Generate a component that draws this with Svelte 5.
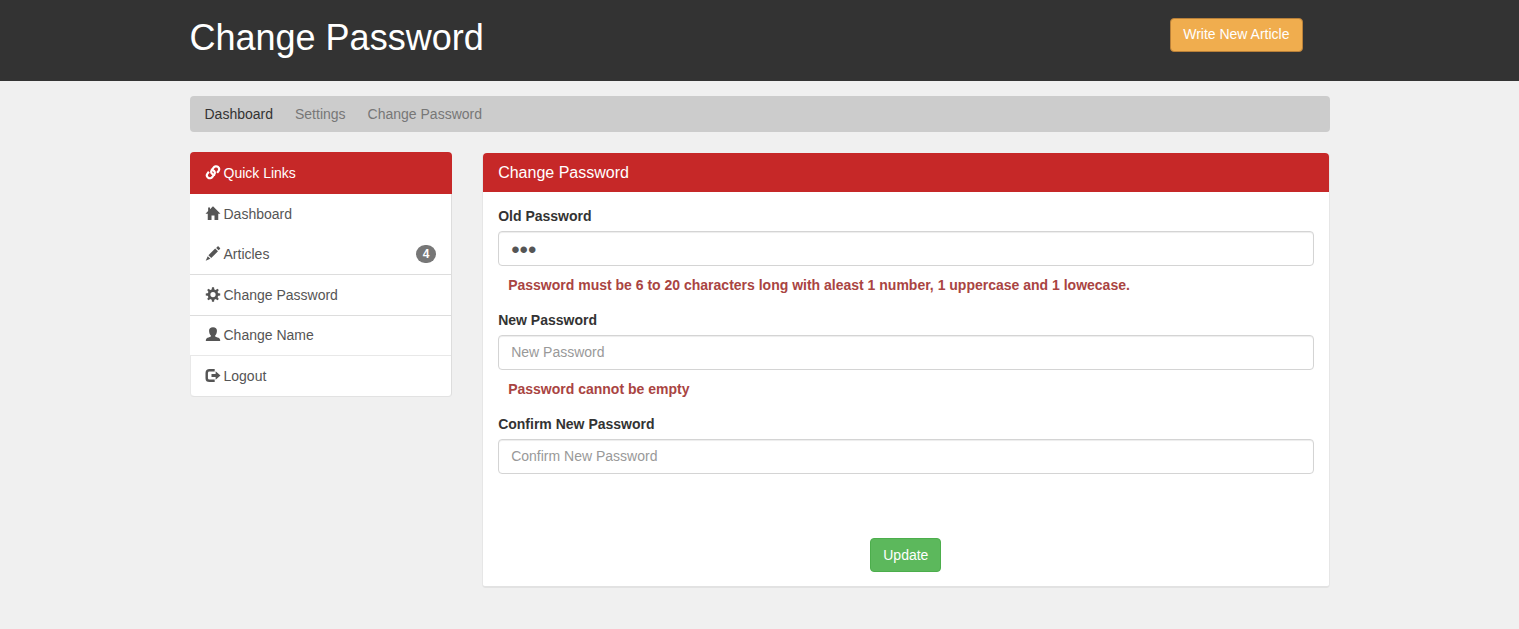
<script>
  const crumbs = [
    { label: 'Dashboard', current: true },
    { label: 'Settings' },
    { label: 'Change Password' }
  ];

  const links = [
    { label: 'Dashboard', icon: 'home', rule: 'none' },
    { label: 'Articles', icon: 'pencil', rule: 'solid', count: 4 },
    { label: 'Change Password', icon: 'cog', rule: 'solid' },
    { label: 'Change Name', icon: 'user', rule: 'inner' },
    { label: 'Logout', icon: 'logout', rule: 'last' }
  ];

  const teeth = [0, 45, 90, 135, 180, 225, 270, 315];

  let oldPassword = $state('abc');
  let newPassword = $state('');
  let confirmPassword = $state('');
</script>

{#snippet icon(name)}
  <svg class="icon" viewBox="0 0 16 16" aria-hidden="true">
    {#if name === 'link'}
      <g fill="none" stroke="currentColor" stroke-width="2.3">
        <path d="M10.2 10.4C7.4 10.8 5.2 8.2 6.4 6L8.6 2.9C9.7 1.3 11.9 1 13.3 2.1 14.7 3.2 14.9 5 13.9 6.4L12.4 8.4" />
        <path d="M5.8 5.2C8.6 4.8 10.8 7.4 9.6 9.6L7.4 12.7C6.3 14.3 4.1 14.6 2.7 13.5 1.3 12.4 1.1 10.6 2.1 9.2L3.6 7.2" />
      </g>
    {:else if name === 'home'}
      <path d="M8 .2 16 8.2H13.6V15H9.6V10H6.4V15H2.4V8.2H0L2.8 5.4V1.5H4.8V3.4Z" />
    {:else if name === 'pencil'}
      <path d="M11.4 2 12.8.6Q13.4 0 14 .6L15.4 2Q16 2.6 15.4 3.2L14 4.6ZM10.3 2.7 13.3 5.7 6.1 12.9 3.1 9.9ZM2.4 10.8 5.2 13.6 .2 15.7Z" />
    {:else if name === 'cog'}
      <circle cx="8" cy="8" r="4.2" fill="none" stroke="currentColor" stroke-width="2.8" />
      {#each teeth as turn}
        <path d="M6.5 3.4 6.9.3H9.1L9.5 3.4Z" transform="rotate({turn} 8 8)" />
      {/each}
    {:else if name === 'user'}
      <path d="M8 .2C10.8.2 12.2 1.6 12.2 4.1 12.2 6.6 11.3 8.2 10.3 9.1V10.2C11.8 10.9 13.7 11.4 14.9 12.2Q15.7 12.8 15.7 14.8H.3Q.3 12.8 1.1 12.2C2.3 11.4 4.2 10.9 5.7 10.2V9.1C4.7 8.2 3.8 6.6 3.8 4.1 3.8 1.6 5.2.2 8 .2Z" />
    {:else if name === 'logout'}
      <path d="M9.8 2.4H4.3Q1.3 2.4 1.3 5.2V10.8Q1.3 13.6 4.3 13.6H9.8" fill="none" stroke="currentColor" stroke-width="2.6" />
      <path d="M6.4 6.4H10.8V3.4L16 8 10.8 12.6V9.6H6.4Z" />
    {/if}
  </svg>
{/snippet}

<header>
  <div class="container head">
    <h1>Change Password</h1>
    <button type="button" class="btn warning">Write New Article</button>
  </div>
</header>

<div class="container">
  <nav class="crumbs" aria-label="Breadcrumb">
    {#each crumbs as crumb}
      <a href="#top" class:current={crumb.current}>{crumb.label}</a>
    {/each}
  </nav>

  <div class="columns">
    <nav class="links" aria-label="Quick Links">
      <a href="#top" class="heading">{@render icon('link')}<span>Quick Links</span></a>
      {#each links as link}
        <a href="#top" class="link {link.rule}">
          {@render icon(link.icon)}<span>{link.label}</span>
          {#if link.count}<span class="badge">{link.count}</span>{/if}
        </a>
      {/each}
    </nav>

    <main class="panel">
      <h2>Change Password</h2>
      <form onsubmit={(event) => event.preventDefault()}>
        <div class="field">
          <label for="old">Old Password</label>
          <input id="old" type="password" placeholder="Old Password" bind:value={oldPassword} />
          <p>Password must be 6 to 20 characters long with aleast 1 number, 1 uppercase and 1 lowecase.</p>
        </div>
        <div class="field">
          <label for="new">New Password</label>
          <input id="new" type="password" placeholder="New Password" bind:value={newPassword} />
          <p>Password cannot be empty</p>
        </div>
        <div class="field">
          <label for="confirm">Confirm New Password</label>
          <input id="confirm" type="password" placeholder="Confirm New Password" bind:value={confirmPassword} />
        </div>
        <button type="submit" class="btn success">Update</button>
      </form>
    </main>
  </div>
</div>

<style>
  :global(body) {
    background: #f0f0f0;
    color: #333;
    font: 14px/20px "Liberation Sans", Arial, sans-serif;
  }
  :global(*) {
    box-sizing: border-box;
  }
  a {
    text-decoration: none;
  }
  .container {
    max-width: 1170px;
    margin: 0 auto;
    padding: 0 15px;
  }
  header {
    background: #333;
    color: #fff;
    margin-bottom: 15px;
  }
  .head {
    display: flex;
    justify-content: space-between;
    align-items: flex-start;
    padding-top: 18px;
    padding-right: 42px;
    padding-bottom: 23px;
  }
  h1 {
    margin: 0;
    font-size: 36px;
    line-height: 40px;
    font-weight: 400;
  }
  .btn {
    height: 34px;
    padding: 0 12px;
    border: 1px solid;
    border-radius: 4px;
    color: #fff;
    font: inherit;
    cursor: pointer;
  }
  .warning {
    padding-bottom: 2px;
    background: #f0ad4e;
    border-color: #b98039;
  }
  .success {
    background: #5cb85c;
    border-color: #4cae4c;
  }
  .crumbs {
    display: flex;
    gap: 22px;
    padding: 8px 15px;
    margin-bottom: 20px;
    border-radius: 4px;
    background: #ccc;
  }
  .crumbs a {
    color: #777;
  }
  .crumbs .current {
    color: #333;
  }
  .columns {
    display: grid;
    grid-template-columns: 31fr 100fr;
    gap: 30px;
    align-items: start;
  }
  .links a {
    display: flex;
    align-items: center;
    gap: 3px;
    padding: 10px 15px;
  }
  .links .heading {
    min-height: 42px;
    border-radius: 4px 4px 0 0;
    background: #c62828;
    color: #fff;
  }
  .links .link {
    border: 0 solid #ddd;
    border-right-width: 1px;
    background: #fff;
    color: #555;
  }
  .links .solid {
    border-bottom-width: 1px;
  }
  .links .inner {
    padding: 9px 15px 11px;
    box-shadow: inset 0 -1px #e8e8e8;
  }
  .links .last {
    border-bottom: 1px solid #e2e2e2;
    border-radius: 0 0 4px 4px;
    box-shadow: inset 1px 0 #e8e8e8;
  }
  .icon {
    width: 16px;
    height: 15px;
    margin-bottom: 2px;
    flex: none;
    fill: currentColor;
  }
  .badge {
    min-width: 20px;
    margin-left: auto;
    padding: 3px 6px;
    border-radius: 10px;
    background: #777;
    color: #fff;
    font-size: 12px;
    line-height: 12px;
    font-weight: 700;
    text-align: center;
  }
  .panel {
    margin-top: 1px;
    border: 1px solid #e6e6e6;
    border-top: 0;
    border-bottom: 2px solid #e2e2e2;
    border-radius: 4px;
    background: #fff;
  }
  h2 {
    padding: 10px 15px 9px;
    margin: 0;
    border-radius: 4px 4px 0 0;
    background: #c62828;
    color: #fff;
    font-size: 16px;
    line-height: 20px;
    font-weight: 400;
  }
  form {
    padding: 14px 15px;
  }
  label {
    display: block;
    margin-bottom: 5px;
    font-weight: 700;
  }
  input {
    display: block;
    width: 100%;
    height: 35px;
    padding: 6px 12px 7px;
    border: 1px solid #d4d4d4;
    border-radius: 4px;
    background: #fff;
    box-shadow: inset 0 1px 1px rgba(0, 0, 0, 0.075);
    color: #555;
    font: inherit;
  }
  input[type="password"]:not(:placeholder-shown) {
    padding: 7px 12px 5px;
    font-size: 24px;
  }
  input::placeholder {
    color: #999;
    opacity: 1;
  }
  p {
    margin: 0;
    padding: 9px 10px 15px;
    color: #a94442;
    font-weight: 700;
  }
  .success {
    display: block;
    margin: 64px auto 0;
  }
</style>
